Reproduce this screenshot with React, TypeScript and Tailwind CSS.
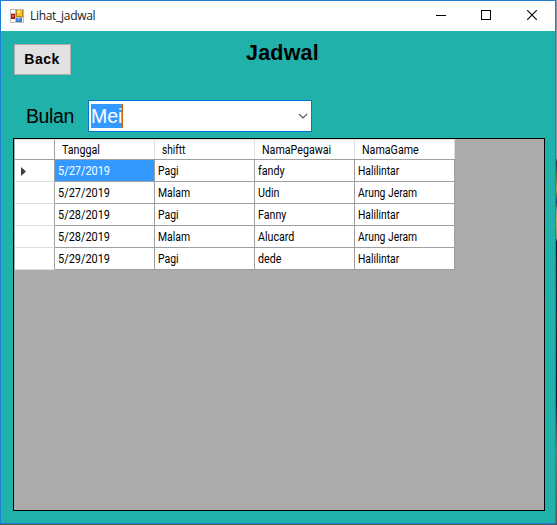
const rows = [
  ['5/27/2019', 'Pagi', 'fandy', 'Halilintar'],
  ['5/27/2019', 'Malam', 'Udin', 'Arung Jeram'],
  ['5/28/2019', 'Pagi', 'Fanny', 'Halilintar'],
  ['5/28/2019', 'Malam', 'Alucard', 'Arung Jeram'],
  ['5/29/2019', 'Pagi', 'dede', 'Halilintar'],
];

const headers = ['Tanggal', 'shiftt', 'NamaPegawai', 'NamaGame'];
const headerScale = ['scale-x-[0.89]', 'scale-x-[0.84]', 'scale-x-[0.89]', 'scale-x-[0.89]'];
const cellScale = ['scale-x-[0.91]', 'scale-x-[0.87]', 'scale-x-[0.89]', 'scale-x-[0.86]'];

function FormIcon() {
  return (
    <svg width="14" height="14" viewBox="0 0 14 14" shapeRendering="crispEdges">
      <rect width="14" height="14" fill="#bcbcbc" />
      <path d="M1 1h4v3H1zM1 10h4v3H1zM12 9h1v4h-1z" fill="#fff" />
      <rect x="6" y="1" width="7" height="7" fill="#b8860b" />
      <rect x="7" y="1" width="5" height="6" fill="#f8c42d" />
      <rect x="7" y="2" width="3" height="2" fill="#ffe48c" />
      <rect x="1" y="5" width="4" height="5" fill="#a51d12" />
      <rect x="2" y="6" width="2" height="2" fill="#e66b5b" />
      <rect x="6" y="9" width="6" height="4" fill="#3d7bdc" />
      <rect x="7" y="9" width="3" height="2" fill="#75a9f5" />
    </svg>
  );
}

function TitleBar() {
  return (
    <header className="flex h-[30px] items-center bg-white pl-[9px]">
      <FormIcon />
      <span className="ml-[6px] flex-1 whitespace-nowrap font-['Open_Sans',sans-serif] text-[12px] tracking-[-0.3px] text-[#222]">
        Lihat_jadwal
      </span>
      <div className="flex -translate-y-px pr-[18px]">
        <svg className="mr-[35px]" width="10" height="11" viewBox="0 0 10 11" shapeRendering="crispEdges">
          <path d="M0 5.5h10" stroke="#000" />
        </svg>
        <svg className="mr-[36px]" width="10" height="11" viewBox="0 0 10 11" shapeRendering="crispEdges">
          <path d="M.5 .5h9v9h-9z" stroke="#000" fill="none" />
        </svg>
        <svg width="10" height="11" viewBox="0 0 10 11">
          <path d="M.2 .2l9.6 9.6M9.8 .2L.2 9.8" stroke="#000" strokeWidth="1.1" />
        </svg>
      </div>
    </header>
  );
}

function ScheduleGrid() {
  return (
    <div className="ml-[12px] mt-[6px] h-[373px] w-[532px] border border-black bg-[#ababab] pl-px font-['Roboto',sans-serif] text-[12px] text-black">
      <div className="flex h-[21px] w-[440px] border-b border-t border-b-[#a0a0a0] border-t-[#e0e0e0] bg-white">
        <div className="w-10 border-r border-[#a0a0a0]" />
        {headers.map((h, i) => (
          <div key={h} className="flex w-[100px] items-center border-r border-[#e0e0e0] pl-[7px] pt-px">
            <span className={`origin-left ${headerScale[i]}`}>{h}</span>
          </div>
        ))}
      </div>
      {rows.map((row, r) => (
        <div key={r} className="flex h-[22px] w-[440px] bg-white">
          <div className="flex w-10 items-center border-b border-r border-b-[#e0e0e0] border-r-[#a0a0a0] pl-[6px] pt-px">
            {r === 0 && (
              <svg width="5" height="9" viewBox="0 0 5 9">
                <path d="M0 0l5 4.5L0 9z" fill="#404040" />
              </svg>
            )}
          </div>
          {row.map((cell, c) => (
            <div
              key={c}
              className={`flex w-[100px] items-center whitespace-nowrap border-b border-r border-[#a0a0a0] pl-[3px] pt-px ${
                r === 0 && c === 0 ? 'bg-[#3399ff] text-white' : ''
              }`}
            >
              <span className={`origin-left ${cellScale[c]}`}>{cell}</span>
            </div>
          ))}
        </div>
      ))}
    </div>
  );
}

export default function App() {
  return (
    <div className="h-[525px] w-[557px] overflow-hidden bg-[linear-gradient(to_bottom,#8298a8_0,#8298a8_158px,#26374a_162px,#b99c52_190px,#123b78_202px,#8c9299_210px,#c9ad5e_220px,#8c8878_238px,#0d1d3c_242px,#102a55_280px,#222b38_320px,#0d1d3c_400px,#777b80_450px,#50555c_525px)] pb-px pr-px">
      <div className="flex h-[524px] w-[556px] flex-col border border-[#1b7fd4] bg-[#20b2aa] font-['Liberation_Sans',Arial,sans-serif] text-black">
        <TitleBar />
        <div className="flex h-[69px] items-start pl-[13px] pt-[13px]">
          <button className="h-[31px] w-[57px] border border-[#adadad] bg-[#e1e1e1] pr-px text-[14px] font-bold tracking-[0.5px]">
            Back
          </button>
          <h1 className="ml-[175px] mt-[-3px] text-[21.5px] font-bold leading-6 tracking-[0.2px]">Jadwal</h1>
        </div>
        <div className="flex h-[32px] items-center pl-[25px]">
          <label className="w-[62px] text-[19.5px] leading-6 tracking-[-0.4px]">Bulan</label>
          <div className="flex h-[32px] w-[224px] items-center border border-[#0078d7] bg-white pl-[2px] pr-[3px]">
            <span className="h-[24px] w-[31px] bg-[#3399ff] text-[19.5px] leading-[24px] text-white">Mei</span>
            <span className="h-[24px] w-px bg-[#cc6600]" />
            <svg className="ml-auto" width="10" height="6" viewBox="0 0 10 6">
              <path d="M1 1l4 4 4-4" fill="none" stroke="#555" strokeWidth="1.1" />
            </svg>
          </div>
        </div>
        <ScheduleGrid />
      </div>
    </div>
  );
}
